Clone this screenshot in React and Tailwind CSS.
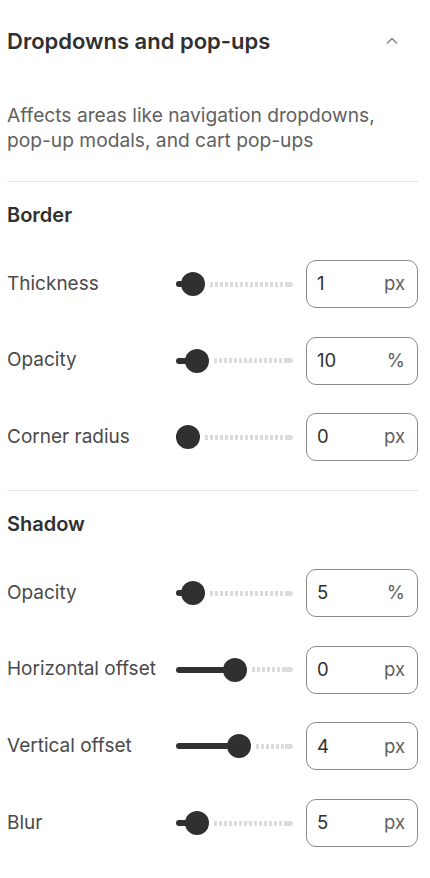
import React from "react";

const FONT = { fontFamily: "Inter, 'Noto Sans', sans-serif" };
const RANGE = 93;

const Slider = ({ frac }) => (
  <div className="flex flex-1 items-center h-[24px]">
    <div
      className="h-[6px] bg-[#303030] rounded-l-full shrink-0"
      style={{ width: `${Math.round(frac * RANGE) + 12}px` }}
    />
    <div className="w-[24px] h-[24px] -ml-[12px] rounded-full bg-[#303030] shrink-0" />
    <div className="flex-1 ml-[5px] h-[5px] bg-[repeating-linear-gradient(90deg,#dcdcdc_0_3px,transparent_3px_5px)]" />
    <div className="w-[8px] h-[5px] bg-[#dcdcdc] rounded-r-full shrink-0" />
  </div>
);

const Row = ({ label, frac, value, unit }) => (
  <div className="flex items-center h-[48px]">
    <span className="w-[169px] shrink-0 text-[19px] text-[#4a4a4a] whitespace-nowrap">{label}</span>
    <Slider frac={frac} />
    <div className="ml-[13px] w-[112px] h-[48px] shrink-0 border border-[#8a8a8a] rounded-[10px] flex items-center justify-between pl-[10px] pr-[12px]">
      <span className="text-[18.5px] text-[#303030]">{value}</span>
      <span className="text-[18.5px] text-[#616161]">{unit}</span>
    </div>
  </div>
);

export default function App() {
  return (
    <div className="bg-white min-h-[878px] pl-[7px] pr-[12px] pt-[27px]" style={FONT}>
      <div className="flex items-center justify-between h-[28px]">
        <h2 className="text-[22px] font-semibold text-[#303030]">Dropdowns and pop-ups</h2>
        <svg width="14" height="14" viewBox="0 0 14 14" className="mr-[19px]" fill="none">
          <path d="M2.5 9 L7 4.5 L11.5 9" stroke="#8a8a8a" strokeWidth="1.6" strokeLinecap="round" strokeLinejoin="round" />
        </svg>
      </div>
      <p className="mt-[48px] text-[19.2px] leading-[25px] text-[#616161]">
        Affects areas like navigation dropdowns,
        <br />
        pop-up modals, and cart pop-ups
      </p>
      <div className="mt-[28px] h-px bg-[#e3e3e3]" />
      <h3 className="mt-[20px] text-[20px] leading-[26px] font-semibold text-[#303030]">Border</h3>
      <div className="mt-[32px] flex flex-col gap-[28.5px]">
        <Row label="Thickness" frac={0.05} value="1" unit="px" />
        <Row label="Opacity" frac={0.1} value="10" unit="%" />
        <Row label="Corner radius" frac={0} value="0" unit="px" />
      </div>
      <div className="mt-[29px] h-px bg-[#e3e3e3]" />
      <h3 className="mt-[20px] text-[20px] leading-[26px] font-semibold text-[#303030]">Shadow</h3>
      <div className="mt-[32px] flex flex-col gap-[28.7px]">
        <Row label="Opacity" frac={0.05} value="5" unit="%" />
        <Row label="Horizontal offset" frac={0.5} value="0" unit="px" />
        <Row label="Vertical offset" frac={0.55} value="4" unit="px" />
        <Row label="Blur" frac={0.1} value="5" unit="px" />
      </div>
    </div>
  );
}
